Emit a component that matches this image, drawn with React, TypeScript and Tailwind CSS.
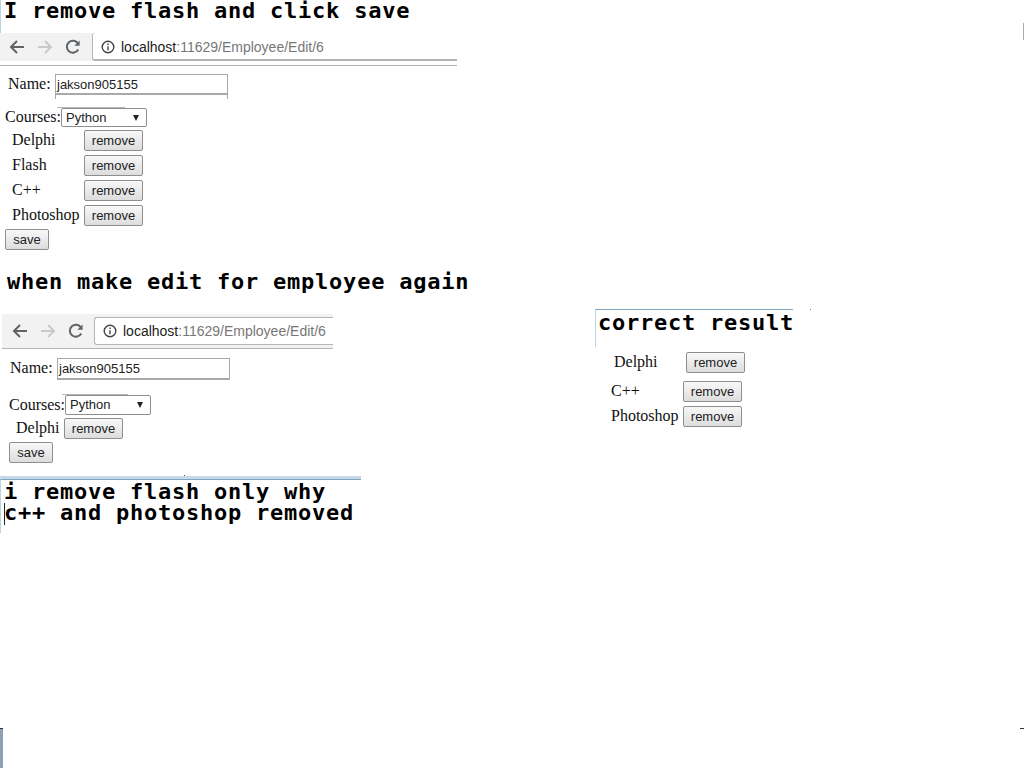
import React from "react";

const mono = "font-['DejaVu_Sans_Mono',monospace] font-bold text-[22px] tracking-[0.76px] leading-[21px] text-black whitespace-pre";

function Remove({ className = "" }: { className?: string }) {
  return <Btn label="remove" className={`w-[59px] ${className}`} />;
}

function Btn({ label, className = "" }: { label: string; className?: string }) {
  return (
    <div className={`h-[21px] flex items-center justify-center rounded-[2px] border border-[#8e8e8e] bg-gradient-to-b from-[#f8f8f8] to-[#dddddd] font-['Liberation_Sans',sans-serif] text-[13px] text-[#222] shrink-0 ${className}`}>
      {label}
    </div>
  );
}

function Browser({ className = "", barClass = "", navClass = "" }: { className?: string; barClass?: string; navClass?: string }) {
  return (
    <div className={`flex items-center bg-[#f2f2f2] ${className}`}>
      <div className={`flex items-center gap-[12px] shrink-0 ${navClass}`}>
        <svg width="16" height="16" viewBox="0 0 16 16" fill="none" stroke="#5f6368" strokeWidth="2">
          <path d="M15 8H2M8 2L2 8l6 6" />
        </svg>
        <svg width="16" height="16" viewBox="0 0 16 16" fill="none" stroke="#c9c9c9" strokeWidth="2">
          <path d="M1 8h13M8 2l6 6-6 6" />
        </svg>
        <svg width="16" height="16" viewBox="0 0 16 16" fill="none" stroke="#5f6368" strokeWidth="2">
          <path d="M13.2 10.5A6 6 0 1 1 13 4.6" />
          <path d="M14.6 1.5v5.2H9.4" fill="#5f6368" stroke="none" />
        </svg>
      </div>
      <div className={`flex flex-1 items-center gap-[6px] h-full bg-white border-l border-[#b5b5b5] pl-[8px] rounded-l-[3px] ${barClass}`}>
        <svg width="14" height="14" viewBox="0 0 14 14" fill="none" stroke="#444" strokeWidth="1.4" className="shrink-0">
          <circle cx="7" cy="7" r="5.8" />
          <path d="M7 6.2v4M7 3.4v1.6" />
        </svg>
        <span className="font-['Liberation_Sans',sans-serif] text-[14px] whitespace-nowrap text-[#777]">
          <span className="text-[#222]">localhost</span>:11629/Employee/Edit/6
        </span>
      </div>
    </div>
  );
}

function Select({ className = "" }: { className?: string }) {
  return (
    <div className={`flex items-center justify-between w-[86px] h-[19px] border border-[#8e8e8e] rounded-[2px] bg-white pl-[4px] pr-[7px] font-['Liberation_Sans',sans-serif] text-[13px] text-[#222] ${className}`}>
      <span>Python</span>
      <svg width="6" height="6" viewBox="0 0 6 6" fill="#222">
        <path d="M0 0h6L3 6z" />
      </svg>
    </div>
  );
}

function Course({ name, labelClass, className = "" }: { name: string; labelClass: string; className?: string }) {
  return (
    <div className={`flex items-center h-[21px] ${className}`}>
      <span className={`shrink-0 pb-[2px] ${labelClass}`}>{name}</span>
      <Remove />
    </div>
  );
}

export default function App() {
  return (
    <div className="relative flex w-[1024px] h-[768px] overflow-hidden bg-white font-['Liberation_Serif',serif] text-[16px] text-[#111]">
      <div className="w-[595px] shrink-0 flex flex-col">
        {/* first capture */}
        <div className={`h-[33px] border-l border-[#bcd3e4] pl-[3px] ${mono}`}>I remove flash and click save</div>
        <div className="w-[457px] h-[33px] border-b border-[#b5b5b5]">
          <Browser className="h-[28px]" navClass="w-[92px] pl-[9px]" barClass="border-b-2 border-b-[#b5b5b5] pt-[2px]" />
        </div>
        <div className="flex mt-[8px] pl-[8px] h-[25px]">
          <span className="w-[47px] h-[21px] leading-[20px]">Name:</span>
          <div className="w-[173px] h-[25px] border-x border-t border-[#a9a9a9]">
            <div className="h-[20px] border-b-[2px] border-[#a9a9a9] pl-px font-['Liberation_Sans',sans-serif] text-[13px] leading-[19px] text-[#222]">jakson905155</div>
          </div>
        </div>
        <div className="ml-[57px] mt-[8px] w-[68px] h-px bg-[#b5b5b5]" />
        <div className="flex items-center pl-[5px] h-[19px]">
          <span className="w-[56px] pb-[1px]">Courses:</span>
          <Select />
        </div>
        <div className="flex flex-col gap-[4px] mt-[3px] pl-[12px]">
          <Course name="Delphi" labelClass="w-[72px]" />
          <Course name="Flash" labelClass="w-[72px]" />
          <Course name="C++" labelClass="w-[72px]" />
          <Course name="Photoshop" labelClass="w-[72px]" />
        </div>
        <Btn label="save" className="w-[44px] ml-[5px] mt-[3px]" />

        {/* second capture */}
        <div className={`mt-[21px] ml-[7px] h-[21px] ${mono}`}>when make edit for employee again</div>
        <div className="ml-[2px] mt-[22px] w-[331px] h-[35px] border-b border-[#b5b5b5]">
          <Browser className="h-[34px] py-[3px]" navClass="w-[92px] pl-[10px]" barClass="border-y border-y-[#b5b5b5]" />
        </div>
        <div className="flex mt-[9px] pl-[10px]">
          <span className="w-[47px] h-[21px] leading-[20px]">Name:</span>
          <div className="w-[173px] h-[22px] border border-b-2 border-[#a9a9a9] pl-px font-['Liberation_Sans',sans-serif] text-[13px] leading-[19px] text-[#222]">jakson905155</div>
        </div>
        <div className="ml-[62px] mt-[14px] w-[66px] h-px bg-[#b5b5b5]" />
        <div className="flex items-center pl-[9px] h-[20px]">
          <span className="w-[56px]">Courses:</span>
          <Select className="h-[20px]" />
        </div>
        <Course name="Delphi" labelClass="w-[48px]" className="mt-[3px] pl-[16px]" />
        <Btn label="save" className="w-[44px] ml-[9px] mt-[3px]" />

        {/* third capture */}
        <div className="mt-[13px] w-[361px] h-[57px] border-t-[3px] border-t-[#c9d8e8]">
          <div className="h-full border-t border-t-[#7ea6bd] border-l border-l-[#bcd3e4] pl-[3px] pt-px">
            <div className={mono}>i remove flash only why</div>
            <div className={mono}>c++ and photoshop removed</div>
          </div>
        </div>
      </div>

      {/* correct result */}
      <div className="flex flex-col pt-[309px]">
        <div className={`w-[198px] h-[38px] border-t border-t-[#7ea6bd] border-l border-l-[#bcd3e4] pl-[2px] pt-[2px] ${mono}`}>correct result</div>
        <Course name="Delphi" labelClass="w-[72px]" className="mt-[5px] ml-[19px]" />
        <Course name="C++" labelClass="w-[72px]" className="mt-[8px] ml-[16px]" />
        <Course name="Photoshop" labelClass="w-[72px]" className="mt-[4px] ml-[16px]" />
      </div>

      {/* stray capture edges */}
      <div className="absolute left-0 top-[728px] w-[3px] h-[40px] bg-[#8c9fb5] border-t border-t-[#333]" />
      <div className="absolute right-0 top-[728px] w-[4px] h-px bg-[#333]" />
      <div className="absolute right-0 top-[23px] w-px h-[17px] bg-[#aaa]" />
      <div className="absolute left-[4px] top-[503px] w-px h-[22px] bg-[#222]" />
      <div className="absolute left-[184px] top-[475px] w-px h-px bg-[#555]" />
      <div className="absolute left-[810px] top-[309px] w-px h-px bg-[#777]" />
    </div>
  );
}
